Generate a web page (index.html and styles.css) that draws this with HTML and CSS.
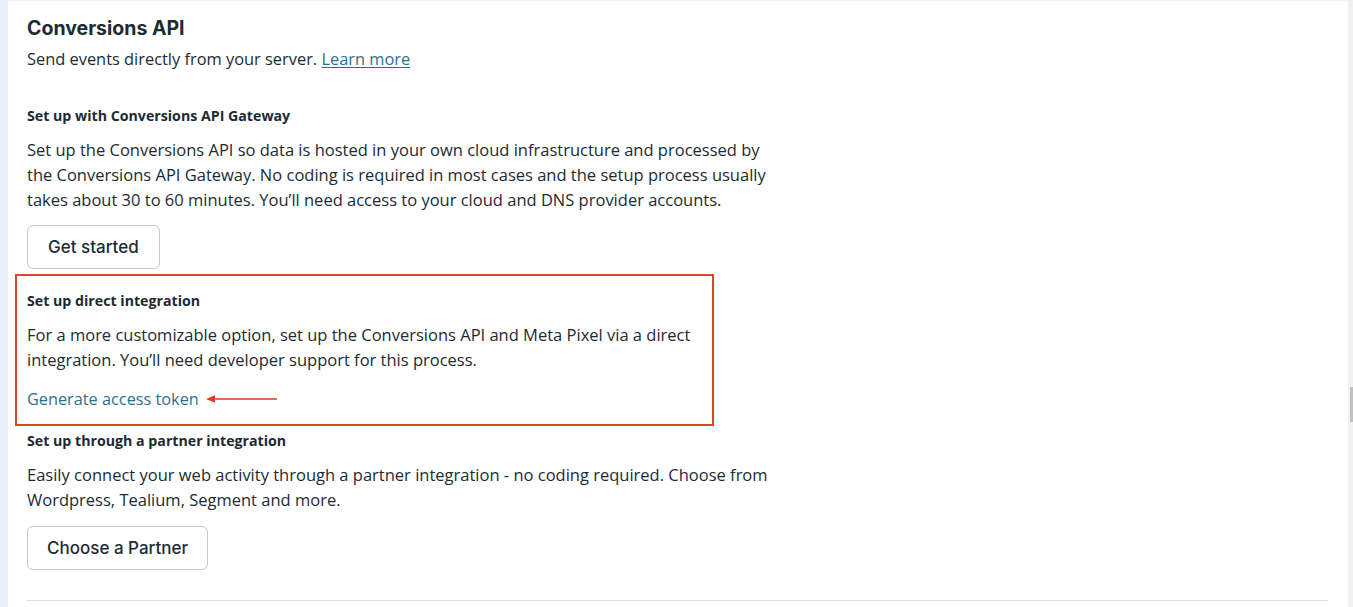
FILE: index.html
```html
<!DOCTYPE html>
<html lang="en">
<head>
<meta charset="utf-8">
<title>Conversions API</title>
<link rel="stylesheet" href="styles.css">
</head>
<body>
<div class="page">
  <div class="strip"></div>
  <main class="card">
    <h1 class="title">Conversions API</h1>
    <p class="lead">Send events directly from your server. <a class="learn" href="#">Learn more</a></p>

    <section class="option first">
      <h2 class="sub">Set up with Conversions API Gateway</h2>
      <p class="text">Set up the Conversions API so data is hosted in your own cloud infrastructure and processed by the Conversions API Gateway. No coding is required in most cases and the setup process usually takes about 30 to 60 minutes. You’ll need access to your cloud and DNS provider accounts.</p>
      <button class="btn" type="button">Get started</button>
    </section>

    <section class="option highlight">
      <h2 class="sub">Set up direct integration</h2>
      <p class="text">For a more customizable option, set up the Conversions API and Meta Pixel via a direct integration. You’ll need developer support for this process.</p>
      <div class="token-row">
        <a class="token" href="#">Generate access token</a>
        <svg class="arrow" width="72" height="10" viewBox="0 0 72 10" aria-hidden="true">
          <path d="M6 5 H71" stroke="#e23b24" stroke-width="1.6" fill="none"/>
          <path d="M0 5 L9 1.2 L9 8.8 Z" fill="#e23b24"/>
        </svg>
      </div>
    </section>

    <section class="option">
      <h2 class="sub">Set up through a partner integration</h2>
      <p class="text">Easily connect your web activity through a partner integration - no coding required. Choose from Wordpress, Tealium, Segment and more.</p>
      <button class="btn" type="button">Choose a Partner</button>
    </section>

    <hr class="divider">
  </main>
  <div class="scrollbar"><div class="thumb"></div></div>
</div>
</body>
</html>
```

FILE: styles.css
```css
* { box-sizing: border-box; }
html, body { margin: 0; padding: 0; }
body {
  background: #e8eff9;
  font-family: "Open Sans", "Noto Sans", sans-serif;
  color: #1c2b33;
  overflow: hidden;
}
.page {
  display: flex;
  height: 607px;
}
.strip {
  width: 8px;
  flex: none;
  background: #e6eef9;
}
.card {
  flex: 1;
  background: #fff;
  padding: 16px 20px 0 19px;
  box-shadow: inset 0 2px 2px -1px rgba(0,0,0,0.06);
  display: flex;
  flex-direction: column;
  align-items: flex-start;
}
.title {
  margin: 0;
  font-family: Inter, "Liberation Sans", sans-serif;
  font-size: 19.5px;
  line-height: 24px;
  font-weight: 700;
  color: #1c2b33;
}
.lead {
  margin: 7px 0 0;
  font-size: 16.4px;
  line-height: 24px;
}
.learn {
  color: #2f6f8e;
  text-decoration: underline;
  text-underline-offset: 2px;
}
.option {
  display: flex;
  flex-direction: column;
  align-items: flex-start;
  width: 770px;
}
.option.first { margin-top: 35px; }
.sub {
  margin: 0;
  font-size: 14.2px;
  line-height: 20px;
  font-weight: 700;
  color: #1c2b33;
}
.text {
  margin: 10.5px 0 0;
  font-size: 16.5px;
  line-height: 25px;
  max-width: 748px;
}
.btn {
  margin-top: 13.5px;
  height: 44px;
  padding: 0 20px;
  background: #fff;
  border: 1px solid #c6c8ca;
  border-radius: 6px;
  font-family: Inter, "Liberation Sans", sans-serif;
  font-size: 17px;
  font-weight: 500;
  color: #1c2b33;
}
.highlight {
  margin-top: 5px;
  margin-left: -12px;
  width: 699px;
  border: 2px solid #d6472c;
  padding: 15px 10px 13px 10px;
}
.highlight .text { max-width: 680px; }
.token-row {
  margin-top: 15.5px;
  display: flex;
  align-items: center;
  gap: 7px;
  height: 24px;
}
.token {
  color: #2f6f8e;
  text-decoration: none;
  font-size: 16.3px;
  line-height: 24px;
}
.arrow { display: block; }
.highlight + .option { margin-top: 5px; }
.highlight + .option .btn { margin-top: 14.5px; padding: 0 19px; }
.divider {
  align-self: stretch;
  margin: 30px 0 0 0;
  border: 0;
  border-top: 1px solid #dadde1;
  width: 1301px;
}
.scrollbar {
  width: 5px;
  flex: none;
  background: #f1f1f1;
  padding-top: 387px;
  display: flex;
  justify-content: flex-end;
}
.thumb {
  width: 3px;
  height: 35px;
  background: #c1c1c1;
}
```
